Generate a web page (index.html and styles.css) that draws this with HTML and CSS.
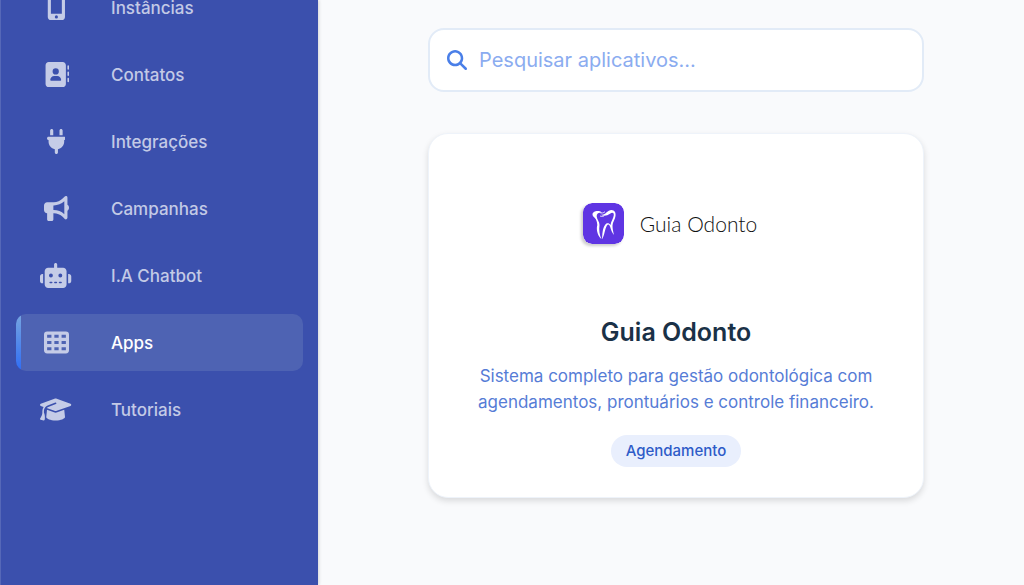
FILE: index.html
```html
<!DOCTYPE html>
<html lang="pt-BR">
<head>
  <meta charset="UTF-8">
  <meta name="viewport" content="width=device-width, initial-scale=1.0">
  <title>Apps</title>
  <link rel="stylesheet" href="styles.css">
</head>
<body>

<aside class="sidebar">
  <nav class="menu">
    <a href="#" class="menu-item">
      <span class="menu-icon"><svg viewBox="0 0 384 512"><path d="M16 64C16 28.7 44.7 0 80 0H304c35.3 0 64 28.7 64 64V448c0 35.3-28.7 64-64 64H80c-35.3 0-64-28.7-64-64V64zM224 448a32 32 0 1 0 -64 0 32 32 0 1 0 64 0zM304 64H80V384H304V64z"/></svg></span>
      <span>Instâncias</span>
    </a>
    <a href="#" class="menu-item">
      <span class="menu-icon"><svg viewBox="0 0 512 512"><path d="M96 0C60.7 0 32 28.7 32 64V448c0 35.3 28.7 64 64 64H384c35.3 0 64-28.7 64-64V64c0-35.3-28.7-64-64-64H96zM208 288h64c44.2 0 80 35.8 80 80c0 8.8-7.2 16-16 16H144c-8.8 0-16-7.2-16-16c0-44.2 35.8-80 80-80zm-32-96a64 64 0 1 1 128 0 64 64 0 1 1 -128 0zM512 80c0-8.8-7.2-16-16-16s-16 7.2-16 16v64c0 8.8 7.2 16 16 16s16-7.2 16-16V80zM496 192c-8.8 0-16 7.2-16 16v64c0 8.8 7.2 16 16 16s16-7.2 16-16V208c0-8.8-7.2-16-16-16zm16 144c0-8.8-7.2-16-16-16s-16 7.2-16 16v64c0 8.8 7.2 16 16 16s16-7.2 16-16V336z"/></svg></span>
      <span>Contatos</span>
    </a>
    <a href="#" class="menu-item">
      <span class="menu-icon"><svg viewBox="0 0 384 512"><path d="M96 0C78.3 0 64 14.3 64 32v96h64V32c0-17.7-14.3-32-32-32zM288 0c-17.7 0-32 14.3-32 32v96h64V32c0-17.7-14.3-32-32-32zM32 160c-17.7 0-32 14.3-32 32s14.3 32 32 32v32c0 77.4 55 142 128 156.8V480c0 17.7 14.3 32 32 32s32-14.3 32-32V412.8C297 398 352 333.4 352 256V224c17.7 0 32-14.3 32-32s-14.3-32-32-32H32z"/></svg></span>
      <span>Integrações</span>
    </a>
    <a href="#" class="menu-item">
      <span class="menu-icon"><svg viewBox="0 0 512 512"><path d="M480 32c0-12.9-7.8-24.6-19.8-29.6s-25.7-2.2-34.9 6.9L381.7 53c-48 48-113.1 75-181 75H192 160 64c-35.3 0-64 28.7-64 64v96c0 35.3 28.7 64 64 64l0 128c0 17.7 14.3 32 32 32h64c17.7 0 32-14.3 32-32V352l8.7 0c67.9 0 133 27 181 75l43.6 43.6c9.2 9.2 22.9 11.9 34.9 6.9s19.8-16.6 19.8-29.6V300.4c18.6-8.8 32-32.5 32-60.4s-13.4-51.6-32-60.4V32zm-64 76.7V240 371.3C357.2 317.8 280.5 288 200.7 288H192V192h8.7c79.8 0 156.5-29.8 215.3-83.3z"/></svg></span>
      <span>Campanhas</span>
    </a>
    <a href="#" class="menu-item">
      <span class="menu-icon"><svg viewBox="0 0 640 512"><path d="M320 0c17.7 0 32 14.3 32 32V96H472c39.8 0 72 32.2 72 72V440c0 39.8-32.2 72-72 72H168c-39.8 0-72-32.2-72-72V168c0-39.8 32.2-72 72-72H288V32c0-17.7 14.3-32 32-32zM208 384c-8.8 0-16 7.2-16 16s7.2 16 16 16h32c8.8 0 16-7.2 16-16s-7.2-16-16-16H208zm96 0c-8.8 0-16 7.2-16 16s7.2 16 16 16h32c8.8 0 16-7.2 16-16s-7.2-16-16-16H304zm96 0c-8.8 0-16 7.2-16 16s7.2 16 16 16h32c8.8 0 16-7.2 16-16s-7.2-16-16-16H400zM264 256a40 40 0 1 0 -80 0 40 40 0 1 0 80 0zm152 40a40 40 0 1 0 0-80 40 40 0 1 0 0 80zM48 224H64V416H48c-26.5 0-48-21.5-48-48V272c0-26.5 21.5-48 48-48zm544 0c26.5 0 48 21.5 48 48v96c0 26.5-21.5 48-48 48H576V224h16z"/></svg></span>
      <span>I.A Chatbot</span>
    </a>
    <a href="#" class="menu-item active">
      <span class="menu-icon"><svg viewBox="0 0 512 512"><path fill-rule="evenodd" d="M64 32H448a64 64 0 0 1 64 64V416a64 64 0 0 1-64 64H64a64 64 0 0 1-64-64V96A64 64 0 0 1 64 32zM64 96v64h88V96zM212 96v64h88V96zM360 96v64h88V96zM64 224v64h88v-64zM212 224v64h88v-64zM360 224v64h88v-64zM64 352v64h88v-64zM212 352v64h88v-64zM360 352v64h88v-64z"/></svg></span>
      <span>Apps</span>
    </a>
    <a href="#" class="menu-item">
      <span class="menu-icon"><svg viewBox="0 0 640 512"><path d="M320 32c-8.1 0-16.1 1.4-23.7 4.1L15.8 137.4C6.3 140.9 0 149.9 0 160s6.3 19.1 15.8 22.6l57.9 20.9C57.3 229.3 48 259.8 48 291.9v28.1c0 28.4-10.8 57.7-22.3 80.8c-6.5 13-13.9 25.8-22.5 37.6C0 442.7-.9 448.3 .9 453.4s6 8.9 11.2 10.2l64 16c4.2 1.1 8.7 .3 12.4-2s6.3-6.1 7.1-10.4c8.6-42.8 4.3-81.2-2.1-108.7C90.3 344.3 86 329.8 80 316.5V291.9c0-30.2 10.2-58.7 27.9-81.5c12.9-15.5 29.6-28 49.2-35.7l157-61.7c8.2-3.2 17.5 .8 20.7 9s-.8 17.5-9 20.7l-157 61.7c-12.4 4.9-23.3 12.4-32.2 21.6l159.6 57.6c7.6 2.7 15.6 4.1 23.7 4.1s16.1-1.4 23.7-4.1L624.2 182.6c9.5-3.4 15.8-12.5 15.8-22.6s-6.3-19.1-15.8-22.6L343.7 36.1C336.1 33.4 328.1 32 320 32zM128 408c0 35.3 86 72 192 72s192-36.7 192-72L496.7 262.6 354.5 314c-11.1 4-22.8 6-34.5 6s-23.5-2-34.5-6L143.3 262.6 128 408z"/></svg></span>
      <span>Tutoriais</span>
    </a>
  </nav>
</aside>

<main class="content">
  <label class="search">
    <svg class="search-icon" viewBox="0 0 512 512"><path d="M416 208c0 45.9-14.9 88.3-40 122.7L502.6 457.4c12.5 12.5 12.5 32.8 0 45.3s-32.8 12.5-45.3 0L330.7 376c-34.4 25.2-76.8 40-122.7 40C93.1 416 0 322.9 0 208S93.1 0 208 0S416 93.1 416 208zM208 352a144 144 0 1 0 0-288 144 144 0 1 0 0 288z"/></svg>
    <input type="text" class="search-input" placeholder="Pesquisar aplicativos..." aria-label="Pesquisar aplicativos">
  </label>

  <article class="app-card">
    <div class="app-logo">
      <svg class="logo-mark" viewBox="0 0 41 41">
        <rect width="41" height="41" rx="9" fill="#5f35e3"/>
        <path fill="#fff" d="M19 9.500C15 6.500 9.500 8.500 9.500 11.500c0 .8.300 1.500.8 2 3.200 2.500 3.700 5 4 8.500-1 3.500-.5 10 4.200 14.200-2-4.200-2.700-9-2-14.200.2-3-2.500-5.500-2.800-8.500C13.400 10.500 16 9 19 9.500z"/>
        <path fill="#fff" d="M17.500 11.500c5 1.500 6.500-4.500 11-4.500 3 .2 4.500 2.500 4 6-.4 3.500-2.800 6-3 9.500 0 3.500.8 6.500 1.500 9.500-2.200-2.500-3-5.500-4-8.500-.8-2.500-2-2.800-3.200-.8-2 3.500-2.200 9.500-4.800 13.500.5-5 .2-10.500 3.200-14.500 1.500-2 3.800-2 5.300.3.500-4 3-6.500 3.300-9.800.2-2.500-1.500-3-3.800-1.500-3 2-6.500 2.800-9.500.8z"/>
        <path fill="none" stroke="#fff" stroke-width=".8" d="M16.500 9.500c2 1 4 .5 5.500-.8M17 13c1.500.6 3 .5 4 0"/>
      </svg>
      <span class="logo-text">Guia Odonto</span>
    </div>
    <h3 class="app-title">Guia Odonto</h3>
    <p class="app-text">Sistema completo para gestão odontológica com agendamentos, prontuários e controle financeiro.</p>
    <span class="app-tag">Agendamento</span>
  </article>
</main>

</body>
</html>
```
FILE: styles.css
```css
* {
  box-sizing: border-box;
}
body {
  margin: 0;
  min-height: 100vh;
  display: flex;
  background: #f9fafc;
  font-family: Inter, "Liberation Sans", sans-serif;
}

/* sidebar */
.sidebar {
  width: 318px;
  flex-shrink: 0;
  height: 100vh;
  overflow: hidden;
  padding: 0 15px;
  background: #3b50ad;
  border-left: 1px solid #5668b8;
  box-shadow: 1px 0 3px rgba(0, 0, 0, 0.15);
}
.menu {
  display: flex;
  flex-direction: column;
  gap: 10px;
  margin-top: -21px;
}
.menu-item {
  display: flex;
  align-items: center;
  gap: 30px;
  height: 57px;
  padding-left: 15px;
  border-radius: 10px;
  color: #c3cae6;
  font-size: 17px;
  font-weight: 500;
  text-decoration: none;
}
.menu-icon {
  width: 50px;
  display: flex;
  justify-content: center;
}
.menu-icon svg {
  height: 25px;
  fill: #c5cce7;
}
.menu-item.active {
  color: #fff;
  background: linear-gradient(#77a5e0, #2f6df5) left / 5px 100% no-repeat #4e63b3;
}

/* content */
.content {
  flex: 1;
  padding: 28px 100px 28px 110px;
}
.search {
  display: flex;
  align-items: center;
  gap: 12px;
  height: 64px;
  padding: 0 17px;
  background: #fff;
  border: 2px solid #e2ebf7;
  border-radius: 16px;
}
.search-icon {
  width: 20px;
  height: 20px;
  fill: #4a7fe8;
}
.search-input {
  flex: 1;
  min-width: 0;
  padding: 0;
  border: 0;
  outline: 0;
  background: none;
  color: #1e3348;
  font-family: inherit;
  font-size: 20px;
}
.search-input::placeholder {
  color: #8bacf0;
}

.app-card {
  display: flex;
  flex-direction: column;
  align-items: center;
  margin-top: 41px;
  padding: 29px 29px 30px;
  background: #fff;
  border: 1px solid #eef3fa;
  border-radius: 20px;
  box-shadow: 0 3px 6px rgba(0, 0, 0, 0.13);
  text-align: center;
}
.app-logo {
  display: flex;
  align-items: center;
  gap: 16px;
  height: 120px;
  margin-right: 12px;
}
.logo-mark {
  width: 41px;
  height: 41px;
  border-radius: 9px;
  box-shadow: -2px 2px 3px rgba(0, 0, 0, 0.2);
}
.logo-text {
  color: #111;
  font-family: Lato, sans-serif;
  font-size: 21px;
  font-weight: 300;
}
.app-title {
  margin: 34px 0 16px;
  color: #1a3147;
  font-size: 25px;
  line-height: 30px;
  font-weight: 600;
}
.app-text {
  margin: 0 0 20px;
  color: #567cd6;
  font-size: 17px;
  line-height: 26px;
}
.app-tag {
  padding: 0 15px;
  border-radius: 16px;
  background: #e9effd;
  color: #2e5bc8;
  font-size: 15px;
  line-height: 32px;
  font-weight: 500;
}
```
